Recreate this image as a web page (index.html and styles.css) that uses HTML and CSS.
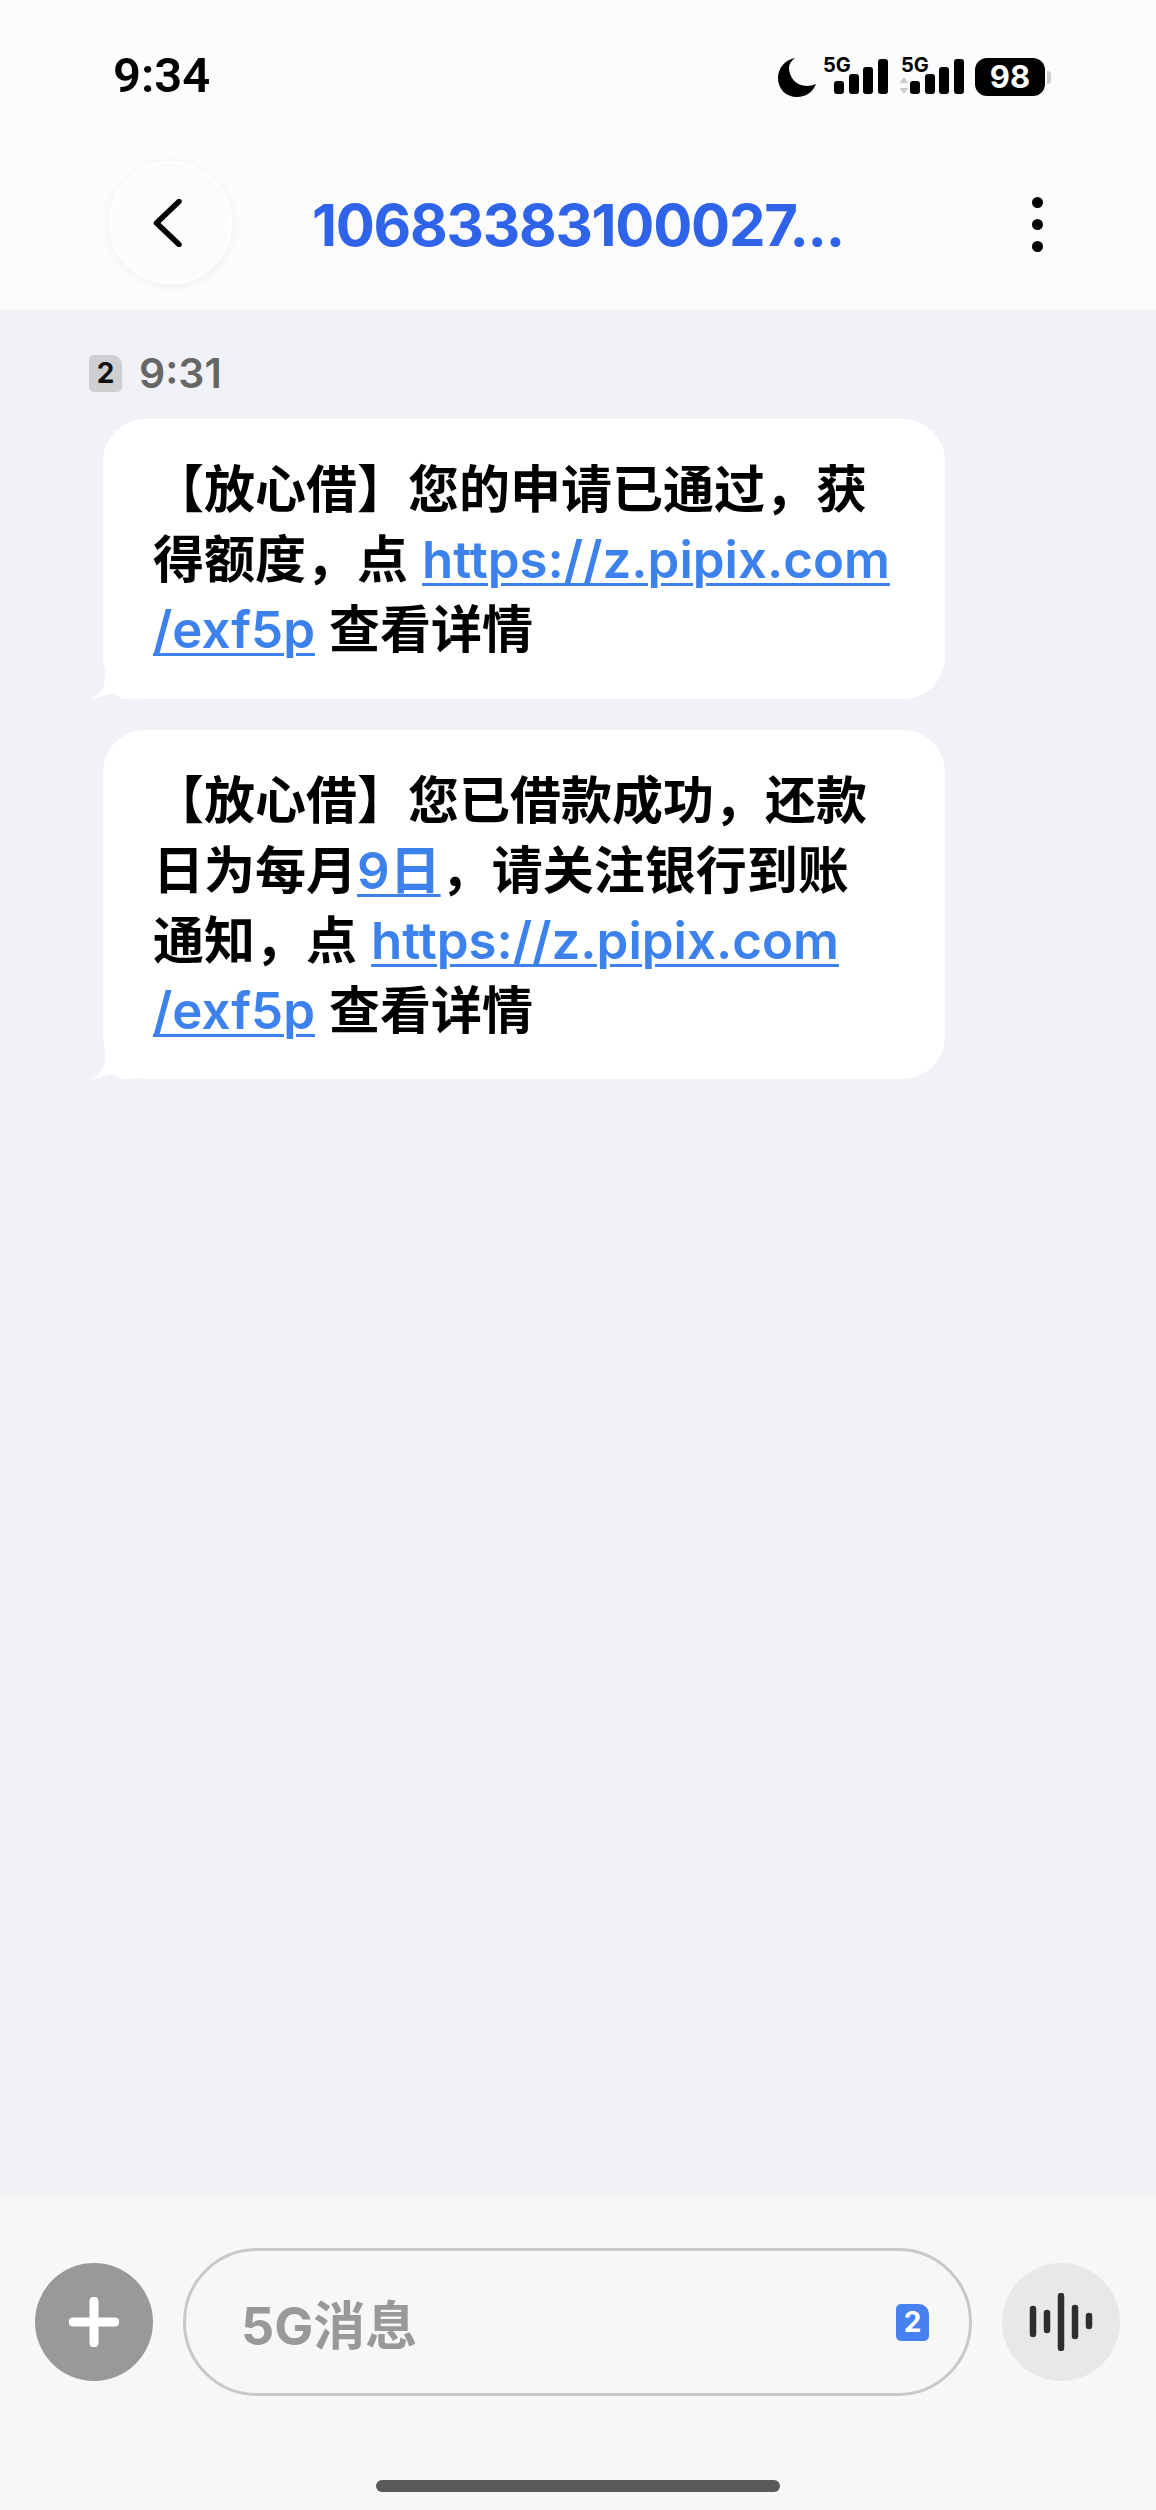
FILE: index.html
```html
<!DOCTYPE html>
<html>
<head>
    <title>短信</title>
    <link rel="stylesheet" href="styles.css">
</head>
<body>
    <div class="top">
        <div class="status-bar">
            <span class="clock">9:34</span>
            <div class="status-icons">
                <svg class="moon" viewBox="0 0 38 39"><path d="M17 0C7 2 0 10 0 20c0 11 8 19 19 19 9 0 16-5 19-13-3 1-6 2-9 2C18 28 11 19 11 10c0-4 2-7 6-10z" fill="#000"/></svg>
                <svg class="signal" viewBox="0 -6 66 48"><text x="0" y="17" class="net">5G</text><rect x="11" y="26" width="10" height="13" rx="3"/><rect x="26" y="19" width="10" height="20" rx="3"/><rect x="40" y="12" width="10" height="27" rx="3"/><rect x="55" y="4" width="10" height="35" rx="3"/></svg>
                <svg class="signal second" viewBox="0 -6 66 48"><text x="2" y="17" class="net">5G</text><path d="M5 22l4.500 6h-9zM5 39l-4.500-6h9z" fill="#ccc"/><rect x="11" y="26" width="10" height="13" rx="3"/><rect x="26" y="19" width="10" height="20" rx="3"/><rect x="40" y="12" width="10" height="27" rx="3"/><rect x="55" y="4" width="10" height="35" rx="3"/></svg>
                <span class="battery">98</span>
                <span class="battery-nub"></span>
            </div>
        </div>
        <div class="nav-bar">
            <div class="back">
                <svg viewBox="0 0 30 48" width="30" height="48"><path d="M27 2.500L4.500 24 27 45.500" fill="none" stroke="#000" stroke-width="5.500" stroke-linecap="round" stroke-linejoin="round"/></svg>
            </div>
            <div class="title">10683383100027...</div>
            <div class="more"><span></span><span></span><span></span></div>
        </div>
    </div>

    <div class="messages">
        <div class="msg-time">
            <span class="sim">2</span>
            <span>9:31</span>
        </div>
        <div class="bubble">
            <svg class="tail" viewBox="0 0 44 30"><path d="M0 30C7 28 14 22 15 10V0h29v30H32C28 27 24 25 20 25 14 26 7 30 0 30z" fill="#fff"/></svg>
            <div>【放心借】您的申请已通过，获</div>
            <div>得额度，点 <a class="link">https://z.pipix.com</a></div>
            <div><a class="link">/exf5p</a> 查看详情</div>
        </div>
        <div class="bubble">
            <svg class="tail" viewBox="0 0 44 30"><path d="M0 30C7 28 14 22 15 10V0h29v30H32C28 27 24 25 20 25 14 26 7 30 0 30z" fill="#fff"/></svg>
            <div>【放心借】您已借款成功，还款</div>
            <div>日为每月<a class="link">9日</a>，请关注银行到账</div>
            <div>通知，点 <a class="link">https://z.pipix.com</a></div>
            <div><a class="link">/exf5p</a> 查看详情</div>
        </div>
    </div>

    <div class="bottom">
        <div class="composer">
            <div class="plus">
                <svg viewBox="0 0 50 50" width="50" height="50"><path d="M25 4v42M4 25h42" stroke="#fff" stroke-width="9" stroke-linecap="round"/></svg>
            </div>
            <div class="input">
                <span class="placeholder">5G消息</span>
                <span class="sim sim-blue">2</span>
            </div>
            <div class="voice">
                <svg viewBox="0 0 64 58" width="64" height="58"><g stroke="#2e2e2e" stroke-width="6.500" stroke-linecap="round" fill="none"><path d="M4 16v25M18 20v17M32 3v52M46 15v28M60 23v10"/></g></svg>
            </div>
        </div>
        <div class="home-bar"></div>
    </div>
</body>
</html>
```

FILE: styles.css
```css
body {
    margin: 0;
    width: 1156px;
    height: 2510px;
    display: flex;
    flex-direction: column;
    font-family: Inter, "Noto Sans CJK SC", sans-serif;
    background-color: #f1f2f7;
    overflow: hidden;
}

.top {
    height: 309px;
    background-color: #fcfcfd;
}

.status-bar {
    height: 161px;
    display: flex;
    justify-content: space-between;
    align-items: flex-start;
    padding: 0 105px 0 113px;
    box-sizing: border-box;
}

.clock {
    margin-top: 48px;
    font-family: Roboto, sans-serif;
    font-size: 49px;
    line-height: 56px;
    font-weight: 600;
    color: #000;
}

.status-icons {
    margin-top: 49px;
    display: flex;
    align-items: flex-start;
}

.moon {
    width: 38px;
    height: 39px;
    margin-top: 9px;
    margin-right: 7px;
}

.signal {
    width: 66px;
    height: 48px;
    margin-right: 10px;
}

.signal .net {
    font-size: 20px;
    font-weight: 700;
    fill: #000;
}

.battery {
    width: 70px;
    height: 38px;
    margin-top: 9px;
    border-radius: 12px;
    background-color: #000;
    color: #fff;
    font-size: 31px;
    line-height: 38px;
    font-weight: 700;
    text-align: center;
}

.battery-nub {
    width: 4px;
    height: 13px;
    margin: 22px 0 0 2px;
    border-radius: 0 4px 4px 0;
    background-color: #ccc;
}

.nav-bar {
    display: flex;
    align-items: center;
    padding: 0 113px 0 109px;
}

.back {
    width: 119px;
    height: 119px;
    border: 2px solid #fff;
    border-radius: 50%;
    box-shadow: 0 2px 12px rgba(0, 0, 0, 0.05);
    display: flex;
    align-items: center;
    justify-content: center;
    flex-shrink: 0;
}

.back svg {
    margin-right: 8px;
}

.title {
    flex: 1;
    margin-left: 80px;
    padding-top: 5px;
    font-size: 58px;
    line-height: 70px;
    font-weight: 700;
    letter-spacing: -1.250px;
    color: #2f63ea;
    white-space: nowrap;
}

.more {
    display: flex;
    flex-direction: column;
    gap: 11px;
    padding-top: 4px;
}

.more span {
    width: 11px;
    height: 11px;
    border-radius: 50%;
    background-color: #000;
}

.messages {
    flex: 1;
    padding: 44px 0 0 103px;
}

.msg-time {
    display: flex;
    align-items: center;
    gap: 17px;
    margin: 0 0 26px -14px;
    height: 40px;
    font-size: 41px;
    font-weight: 600;
    color: #666;
}

.sim {
    width: 33px;
    height: 37px;
    border-radius: 5px 10px 5px 5px;
    background-color: #cfcfd1;
    color: #111;
    font-size: 28px;
    line-height: 37px;
    font-weight: 700;
    text-align: center;
}

.sim-blue {
    background-color: #4780f0;
    color: #fff;
}

.bubble {
    position: relative;
    width: 842px;
    box-sizing: border-box;
    padding: 36px 0 33px 50px;
    margin-bottom: 31px;
    border-radius: 42px;
    background-color: #fff;
    font-size: 51px;
    line-height: 70.200px;
    font-weight: 700;
    word-spacing: 2px;
    color: #000;
    white-space: nowrap;
}

.tail {
    position: absolute;
    left: -13px;
    bottom: 0;
    width: 44px;
    height: 30px;
}

.link {
    color: #3d82ec;
    font-weight: 600;
    text-decoration: underline;
    text-decoration-thickness: 3px;
    text-underline-offset: 5px;
}

.bottom {
    height: 315px;
    background-color: #f7f7f7;
}

.composer {
    display: flex;
    align-items: center;
    padding: 53px 36px 0 35px;
}

.plus {
    width: 118px;
    height: 118px;
    border-radius: 50%;
    background-color: #999;
    display: flex;
    align-items: center;
    justify-content: center;
    flex-shrink: 0;
}

.input {
    width: 791px;
    height: 148px;
    box-sizing: border-box;
    margin: 0 30px;
    padding: 0 40px 0 55px;
    border: 3.500px solid #c8c8c8;
    border-radius: 74px;
    display: flex;
    align-items: center;
    justify-content: space-between;
}

.placeholder {
    font-size: 52px;
    font-weight: 700;
    color: #999;
}

.voice {
    width: 118px;
    height: 118px;
    border-radius: 50%;
    background-color: #e8e8e8;
    display: flex;
    align-items: center;
    justify-content: center;
    flex-shrink: 0;
}

.home-bar {
    width: 404px;
    height: 12px;
    margin: 84px auto 0;
    border-radius: 6px;
    background-color: #5a5a5a;
}
```
